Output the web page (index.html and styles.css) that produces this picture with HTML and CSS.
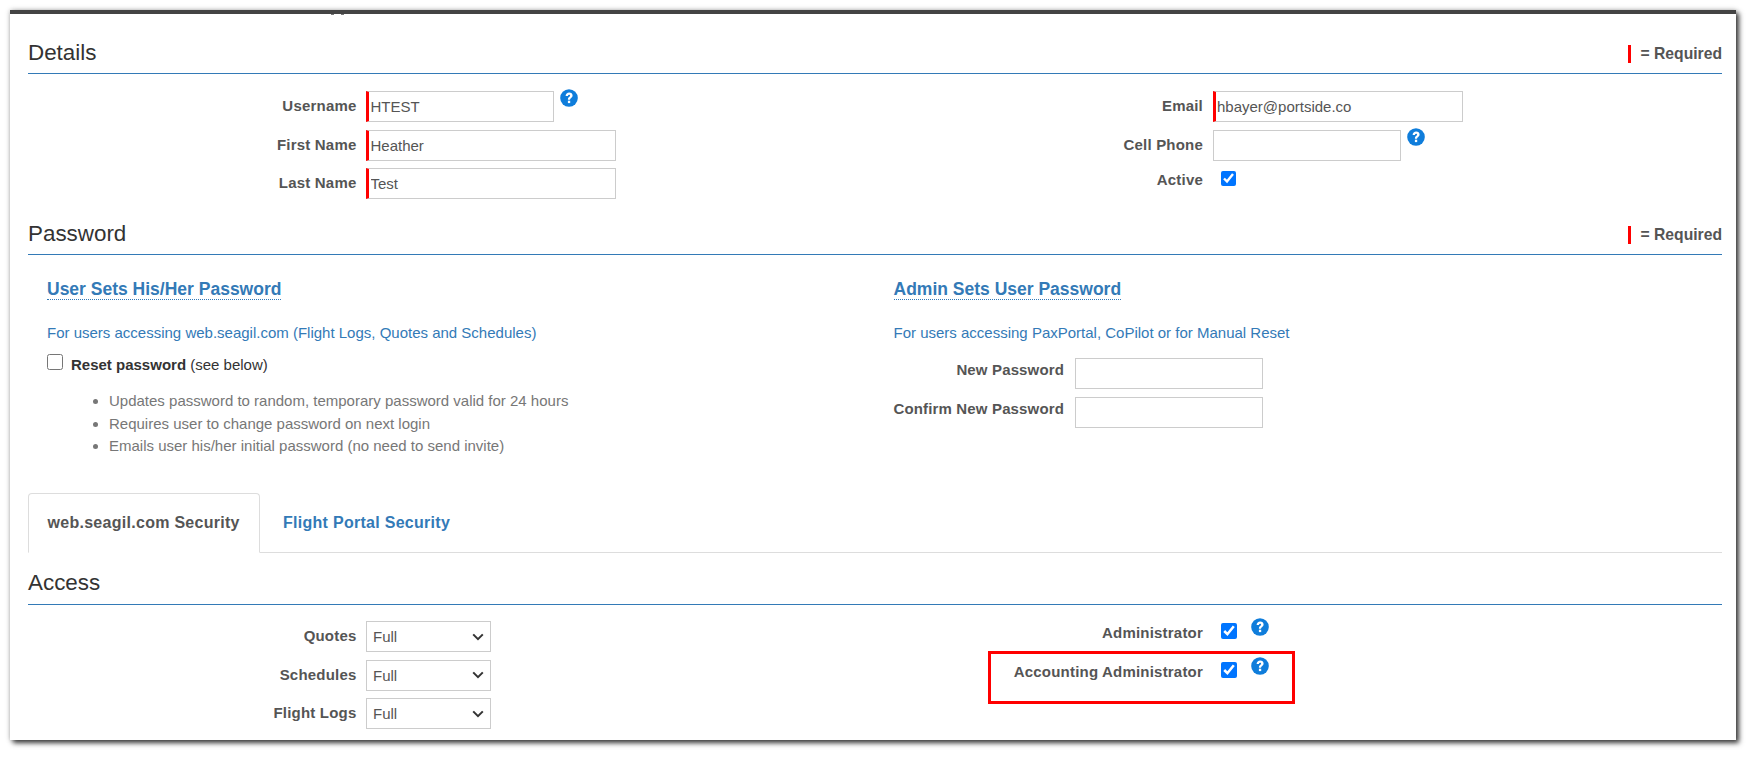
FILE: index.html
```html
<!DOCTYPE html>
<html lang="en">
<head>
<meta charset="utf-8">
<title>User Security</title>
<link rel="stylesheet" href="styles.css">
</head>
<body>
<main class="window">
  <header class="section-head first">
    <h2>Details</h2>
    <span class="req-key">= Required</span>
  </header>
  <div class="cols details">
    <div class="col">
      <div class="row"><label>Username</label><input class="field short req" value="HTEST"><svg class="help"><use href="#q"/></svg></div>
      <div class="row"><label>First Name</label><input class="field wide req" value="Heather"></div>
      <div class="row"><label>Last Name</label><input class="field wide req" value="Test"></div>
    </div>
    <div class="col">
      <div class="row"><label>Email</label><input class="field email req" value="hbayer@portside.co"></div>
      <div class="row"><label>Cell Phone</label><input class="field short"><svg class="help"><use href="#q"/></svg></div>
      <div class="row check-row"><label>Active</label><input class="check" type="checkbox" checked></div>
    </div>
  </div>

  <header class="section-head pw-head">
    <h2>Password</h2>
    <span class="req-key">= Required</span>
  </header>
  <div class="cols pw">
    <div class="col pw-col">
      <h3><span>User Sets His/Her Password</span></h3>
      <p class="note">For users accessing web.seagil.com (Flight Logs, Quotes and Schedules)</p>
      <div class="reset"><input class="check plain" type="checkbox"><span><b>Reset password</b> (see below)</span></div>
      <ul>
        <li>Updates password to random, temporary password valid for 24 hours</li>
        <li>Requires user to change password on next login</li>
        <li>Emails user his/her initial password (no need to send invite)</li>
      </ul>
    </div>
    <div class="col pw-col">
      <h3><span>Admin Sets User Password</span></h3>
      <p class="note">For users accessing PaxPortal, CoPilot or for Manual Reset</p>
      <div class="pw-grid">
        <label>New Password</label><input class="field short" type="text">
        <label>Confirm New Password</label><input class="field short" type="text">
      </div>
    </div>
  </div>

  <nav class="tabs">
    <a class="tab active">web.seagil.com Security</a>
    <a class="tab">Flight Portal Security</a>
  </nav>

  <header class="section-head access-head">
    <h2>Access</h2>
  </header>
  <div class="cols access">
    <div class="col">
      <div class="row"><label>Quotes</label><select class="pick"><option>Full</option></select></div>
      <div class="row"><label>Schedules</label><select class="pick"><option>Full</option></select></div>
      <div class="row"><label>Flight Logs</label><select class="pick"><option>Full</option></select></div>
    </div>
    <div class="col">
      <div class="row flag"><label>Administrator</label><input class="check" type="checkbox" checked><svg class="help"><use href="#q"/></svg></div>
      <div class="row flag"><label>Accounting Administrator</label><input class="check" type="checkbox" checked><svg class="help"><use href="#q"/></svg></div>
      <div class="callout"></div>
    </div>
  </div>
</main>
<svg class="defs" aria-hidden="true">
  <symbol id="q" viewBox="0 0 18 18">
    <circle cx="9" cy="9" r="8.8" fill="#0f7ddb"/>
    <path d="M5.6 6.9C5.7 4.9 7.2 3.6 9.2 3.6c2 0 3.4 1.2 3.4 3 0 1.3-.7 2-1.6 2.6-.7.5-.9.8-.9 1.5H7.9c0-1.5.3-2.1 1.2-2.8.7-.5 1-.8 1-1.2 0-.5-.4-.9-1-.9-.7 0-1.1.4-1.2 1.1z" fill="#fff"/>
    <rect x="7.9" y="11.7" width="2.3" height="2.4" fill="#fff"/>
  </symbol>
</svg>
</body>
</html>
```
FILE: styles.css
```css
* { box-sizing: border-box; }
html, body { margin: 0; padding: 0; background: #fff; }
body {
  width: 1754px;
  height: 758px;
  overflow: hidden;
  padding: 10px 0 0 10px;
  font-family: "Liberation Sans", Arial, sans-serif;
  font-size: 15px;
  color: #555;
}
.defs { display: none; }
.window {
  position: relative;
  width: 1726px;
  height: 730px;
  background: #fff;
  border-top: 4px solid #444;
  padding: 0 14px 0 18px;
  box-shadow: 3px 3px 5px rgba(0, 0, 0, .75), 0 0 5px rgba(0, 0, 0, .25);
}
.window::before {
  content: "";
  position: absolute;
  left: 321px;
  top: 0;
  width: 3px;
  height: 1px;
  background: #777;
  box-shadow: 10px 0 0 #777;
}
.section-head {
  display: flex;
  justify-content: space-between;
  align-items: center;
  height: 40px;
  border-bottom: 1px solid #337ab7;
}
.section-head h2 {
  margin: 0;
  font-size: 22.4px;
  font-weight: 400;
  color: #333;
}
.section-head.first { margin-top: 20px; }
.section-head.first h2 { margin-bottom: 2px; }
.req-key {
  display: flex;
  align-items: center;
  height: 18px;
  border-left: 3px solid #f00;
  padding-left: 9px;
  font-weight: 700;
  font-size: 15.7px;
  color: #555;
}
.cols { display: grid; grid-template-columns: 846.5px 846.5px; }
.details { padding-top: 17px; height: 140px; }
.row {
  display: flex;
  align-items: flex-start;
  height: 38.5px;
}
.row label, .pw-grid label {
  font-weight: 700;
  font-size: 15px;
  letter-spacing: .2px;
  color: #555;
  text-align: right;
}
.row label {
  width: 328.5px;
  margin-right: 9.5px;
  padding-top: 6px;
}
.field {
  display: block;
  height: 31px;
  border: 1px solid #ccc;
  border-radius: 0;
  padding: 0 0 0 4px;
  font: 15px "Liberation Sans", Arial, sans-serif;
  color: #555;
  outline: 0;
  background: #fff;
}
.field.req { border-left: 3px solid #f00; padding-left: 1.5px; }
.short { width: 188px; }
.wide { width: 250px; }
.email { width: 250px; }
.help { width: 18px; height: 18px; margin: -2px 0 0 6px; flex: none; }
.check {
  display: block;
  width: 15px;
  height: 15px;
  margin: 3px 0 0 8px;
  accent-color: #0075ff;
}
.check-row label { padding-top: 3px; }
.pw-head { height: 41px; }
.pw-head .req-key { margin-top: 2px; }
.pw { height: 238px; }
.pw-col { padding-left: 19px; }
.pw-col h3 { margin: 24px 0 0; font-size: 17.5px; line-height: 20px; font-weight: 700; color: #337ab7; }
.pw-col h3 span { display: inline-block; border-bottom: 1px dotted #337ab7; }
.note { margin: 23px 0 0; line-height: 20px; color: #337ab7; }
.reset { display: flex; align-items: flex-start; margin-top: 11px; color: #333; }
.reset span { margin-left: 8px; padding-top: 1px; line-height: 20px; }
.reset b { color: #333; }
.check.plain { margin: 0; width: 16px; height: 16px; }
.pw ul { margin: 15px 0 0; padding: 0 0 0 62px; color: #777; line-height: 22.5px; }
.pw-grid {
  display: grid;
  grid-template-columns: max-content 188px;
  column-gap: 11px;
  row-gap: 8px;
  margin-top: 15px;
}
.pw-grid label { padding-top: 3px; letter-spacing: .15px; }
.tabs {
  display: flex;
  height: 60px;
  border-bottom: 1px solid #ddd;
}
.tab {
  display: block;
  height: 60px;
  padding: 20px 18.5px 0;
  font-size: 16px;
  font-weight: 700;
  letter-spacing: .28px;
  color: #337ab7;
  line-height: 18px;
  border: 1px solid transparent;
  border-radius: 4px 4px 0 0;
}
.tab.active {
  width: 232px;
  color: #555;
  background: #fff;
  border-color: #ddd #ddd #fff;
}
.tab + .tab { padding-left: 22px; }
.access-head { height: 52px; padding-top: 8px; }
.access { padding-top: 16px; }
.pick {
  display: block;
  width: 125px;
  height: 31px;
  border: 1px solid #ccc;
  border-radius: 0;
  padding: 0 0 0 6px;
  font: 15px "Liberation Sans", Arial, sans-serif;
  color: #555;
  appearance: none;
  background: #fff url("data:image/svg+xml,%3Csvg xmlns='http://www.w3.org/2000/svg' width='12' height='8' viewBox='0 0 12 8'%3E%3Cpath d='M1.2 1.4 6 6.2l4.8-4.8' fill='none' stroke='%23333' stroke-width='2'/%3E%3C/svg%3E") no-repeat right 6px center;
}
.flag .check { margin-top: 2px; width: 16px; height: 16px; }
.flag .help { margin: -3px 0 0 14px; }
.flag label { padding-top: 3px; }
.callout {
  position: absolute;
  left: 113px;
  top: 30px;
  width: 307px;
  height: 53px;
  border: 3px solid #f00;
}
.col { position: relative; }
```
